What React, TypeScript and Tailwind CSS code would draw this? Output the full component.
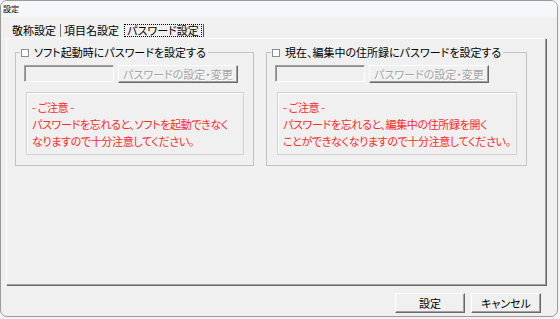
const Raised = "border border-t-white border-l-white border-r-[#696969] border-b-[#696969] shadow-[inset_-1px_-1px_0_#a0a0a0] bg-[#f0f0f0]";

const PasswordGroup = ({
  width,
  label,
  lines,
}: {
  width: string;
  label: string;
  lines: string[];
}) => {
  return (
    <fieldset className={`${width} border border-[#c2c2c2] pb-[10px]`}>
      <legend className="ml-[4px] px-[1px] h-[13px] flex items-center gap-[5px] leading-[13px]">
        <span className="w-[8px] h-[8px] border border-[#8c8c8c] bg-white" />
        <span className="pr-[1px]">{label}</span>
      </legend>
      <div className="flex gap-[4px] pl-[8px] mt-[6px]">
        <div className="w-[90px] h-[17px] border border-t-[#a0a0a0] border-l-[#a0a0a0] border-r-white border-b-white shadow-[inset_1px_1px_0_#8a8a8a] bg-[#f0f0f0]" />
        <div
          className={`${Raised} w-[120px] h-[18px] flex items-center justify-center text-[#a3a3a3] [text-shadow:1px_1px_0_#fff] leading-none`}
        >
          パスワードの設定・変更
        </div>
      </div>
      <div className="ml-[10px] mr-[9px] mt-[9px] h-[63px] border border-[#d2d2d2] shadow-[inset_1px_1px_0_#fff] pl-[5px] pt-[6px] text-[#ff2a2a] leading-[17px] tracking-[-0.35px]">
        {lines.map((l) => (
          <div key={l} className="whitespace-nowrap">
            {l}
          </div>
        ))}
      </div>
    </fieldset>
  );
};

export default function App() {
  return (
    <div className="w-[560px] h-[319px] bg-[#f3f3f3] font-['Noto_Sans_CJK_JP',sans-serif] text-[11px] text-black [font-feature-settings:'palt']">
      <div className="w-[558px] h-[317px] border border-[#9a9a9a] rounded-[7px] bg-[#f0f0f0] flex flex-col overflow-hidden">
        {/* title bar */}
        <div className="h-[16px] shrink-0 bg-[#f5f7fb] flex items-center pl-[2px] text-[8px] leading-none">
          設定
        </div>

        {/* tabs */}
        <div className="h-[21px] shrink-0 flex items-end pb-[1px] pl-[11px]">
          <span className="h-[13px] leading-[13px]">敬称設定</span>
          <span className="ml-[4px] h-[13px] w-px bg-[#7a7a7a]" />
          <span className="ml-[3px] h-[13px] leading-[13px]">項目名設定</span>
          <span className="ml-[5px] w-[78px] h-[13px] border border-dotted border-black flex items-center justify-center leading-none">
            パスワード設定
          </span>
          <span className="ml-[1px] h-[13px] w-px bg-[#555]" />
        </div>

        {/* tab panel */}
        <div className="ml-[5px] w-[540px] h-[247px] shrink-0 border border-t-white border-l-white border-r-[#a0a0a0] border-b-[#a0a0a0] shadow-[1px_1px_0_#696969] flex items-start gap-[12px] pl-[8px] pt-[7px]">
          <PasswordGroup
            width="w-[239px]"
            label="ソフト起動時にパスワードを設定する"
            lines={[
              "- ご注意 -",
              "パスワードを忘れると、ソフトを起動できなく",
              "なりますので十分注意してください。",
            ]}
          />
          <PasswordGroup
            width="w-[261px]"
            label="現在、編集中の住所録にパスワードを設定する"
            lines={[
              "- ご注意 -",
              "パスワードを忘れると、編集中の住所録を開く",
              "ことができなくなりますので十分注意してください。",
            ]}
          />
        </div>

        {/* dialog buttons */}
        <div className="mt-[8px] flex justify-end gap-[6px] pr-[16px]">
          <div className={`${Raised} w-[70px] h-[20px] flex items-center justify-center leading-none`}>
            設定
          </div>
          <div className={`${Raised} w-[70px] h-[20px] flex items-center justify-center leading-none`}>
            キャンセル
          </div>
        </div>
      </div>
    </div>
  );
}
